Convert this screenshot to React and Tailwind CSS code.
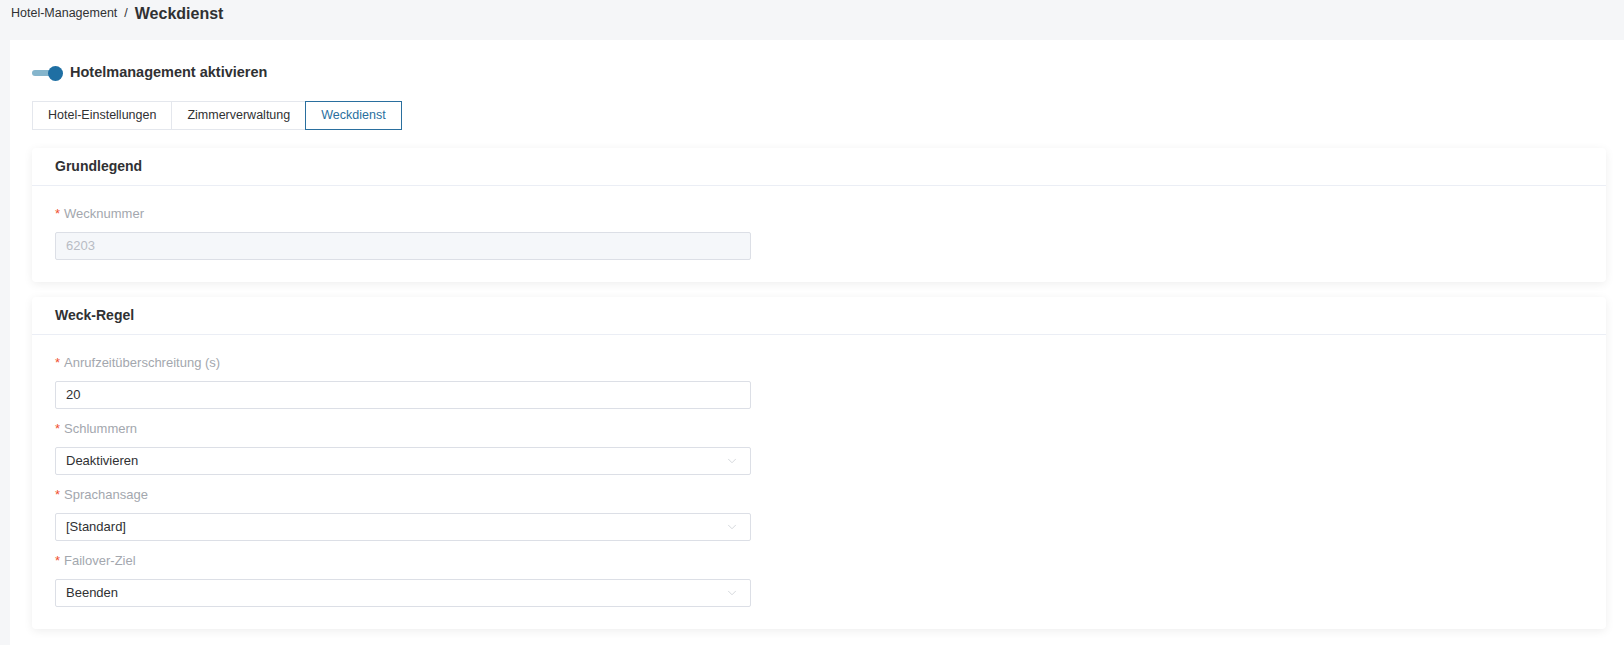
import { ChevronDown } from 'lucide-react';

const font = { fontFamily: '"Liberation Sans", Arial, sans-serif' };

function Label({ text }) {
  return (
    <div className="flex items-center h-[20px] mb-[8px] text-[13px] text-[#a3a7ae]">
      <span className="text-[#f0502e] mr-[4px]">*</span>
      {text}
    </div>
  );
}

function TextInput({ value, disabled }) {
  return (
    <div
      className={`h-[28px] w-[696px] flex items-center px-[10px] border border-[#dcdfe6] rounded-[2px] text-[13px] ${
        disabled ? 'bg-[#f5f7fa] text-[#b8bcc4]' : 'bg-white text-[#303133]'
      }`}
    >
      {value}
    </div>
  );
}

function SelectInput({ value }) {
  return (
    <div className="h-[28px] w-[696px] flex items-center justify-between pl-[10px] pr-[11px] border border-[#dcdfe6] rounded-[2px] bg-white text-[13px] text-[#303133]">
      <span>{value}</span>
      <ChevronDown className="w-[14px] h-[14px] text-[#c8cbd1]" strokeWidth={1.3} />
    </div>
  );
}

function Card({ title, children }) {
  return (
    <div className="bg-white rounded-[4px] shadow-[0_2px_10px_rgba(0,0,0,0.07)]">
      <div className="h-[38px] flex items-center px-[23px] border-b border-[#ebeef5] text-[14px] font-bold text-[#303133]">
        {title}
      </div>
      <div className="pt-[18px] pb-[22px] px-[23px] flex flex-col gap-[10px]">{children}</div>
    </div>
  );
}

function Field({ label, children }) {
  return (
    <div>
      <Label text={label} />
      {children}
    </div>
  );
}

export default function App() {
  const tabs = ['Hotel-Einstellungen', 'Zimmerverwaltung', 'Weckdienst'];
  const active = 2;

  return (
    <div className="min-h-screen bg-[#f5f6f8]" style={font}>
      <div className="h-[40px] flex items-center pl-[11px] pb-[14px] pt-[1px] text-[#303133]">
        <span className="text-[12.5px]">Hotel-Management</span>
        <span className="text-[12.5px] mx-[7px]">/</span>
        <span className="text-[16px] font-bold">Weckdienst</span>
      </div>

      <div className="ml-[10px] bg-white min-h-[605px] pt-[23px] pl-[22px] pr-[18px] pb-[16px]">
        <div className="flex items-center h-[20px]">
          <div className="relative w-[31px] h-[15px] flex items-center">
            <div className="w-[28px] h-[6px] rounded-full bg-[#85b5cc]" />
            <div className="absolute left-[16px] top-0 w-[15px] h-[15px] rounded-full bg-[#1f6fa3]" />
          </div>
          <span className="ml-[7px] text-[14.5px] font-bold text-[#303133]">Hotelmanagement aktivieren</span>
        </div>

        <div className="flex mt-[18px]">
          {tabs.map((t, i) => (
            <div
              key={t}
              className={`h-[29px] flex items-center px-[15px] text-[12.5px] border ${
                i === active
                  ? 'border-[#2a6f9e] text-[#2a6f9e]'
                  : 'border-[#e4e7ed] text-[#303133]'
              } ${i > 0 && i !== active ? 'border-l-0' : ''} ${i === active - 1 ? 'border-r-0' : ''}`}
            >
              {t}
            </div>
          ))}
        </div>

        <div className="mt-[18px] flex flex-col gap-[15px]">
          <Card title="Grundlegend">
            <Field label="Wecknummer">
              <TextInput value="6203" disabled />
            </Field>
          </Card>

          <Card title="Weck-Regel">
            <Field label="Anrufzeitüberschreitung (s)">
              <TextInput value="20" />
            </Field>
            <Field label="Schlummern">
              <SelectInput value="Deaktivieren" />
            </Field>
            <Field label="Sprachansage">
              <SelectInput value="[Standard]" />
            </Field>
            <Field label="Failover-Ziel">
              <SelectInput value="Beenden" />
            </Field>
          </Card>
        </div>
      </div>
    </div>
  );
}
